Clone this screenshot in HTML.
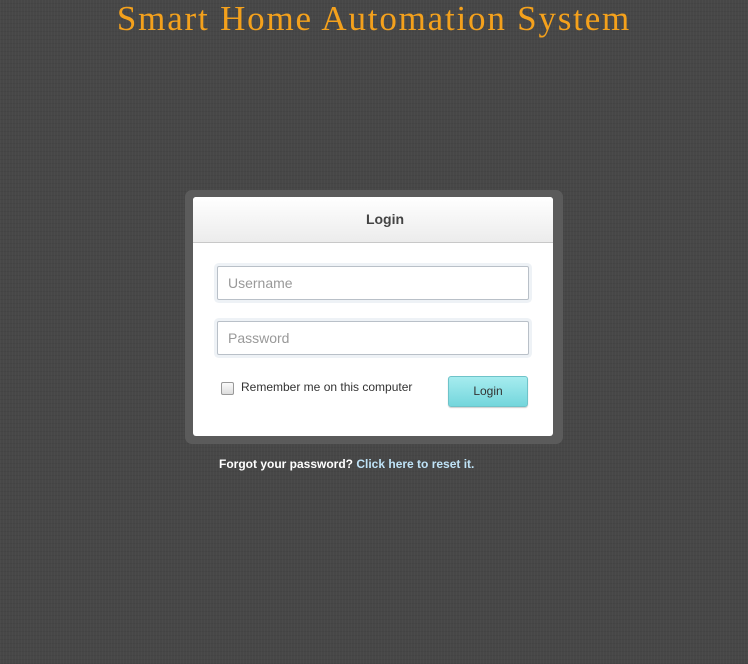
<!DOCTYPE html>
<html><head><style>
html,body{margin:0;padding:0;width:748px;height:664px;overflow:hidden;
background:#474747;
background-image:repeating-linear-gradient(90deg,rgba(255,255,255,.025) 0 1px,transparent 1px 3px),repeating-linear-gradient(0deg,rgba(0,0,0,.05) 0 1px,transparent 1px 4px);
font-family:"Liberation Sans",sans-serif;position:relative}
h1{position:absolute;left:0;width:748px;top:-1px;margin:0;text-align:center;font-family:"Liberation Serif",serif;font-weight:normal;font-size:35px;color:#f4a11c;letter-spacing:1.8px}
.frame{position:absolute;left:185px;top:190px;width:378px;height:254px;background:#5b5b5b;border-radius:7px}
.card{position:absolute;left:193px;top:197px;width:360px;height:239px;background:#fff;border-radius:3px;overflow:hidden}
.hd{height:45px;border-bottom:1px solid #c8c8c8;background:linear-gradient(#fff,#ececec);text-align:center;line-height:45px;font-weight:bold;font-size:14px;color:#444;padding-left:24px}
.in{position:absolute;left:24px;height:32px;border:1px solid #b9c0c8;border-radius:2px;box-shadow:0 0 0 3px #eef2f6;font-size:14px;color:#999;line-height:32px;padding-left:10px;box-sizing:content-box;width:300px}
.cb{position:absolute;left:28px;top:185px;width:11px;height:11px;border:1px solid #999;border-radius:2px;background:linear-gradient(#fafafa,#ddd)}
.rm{position:absolute;left:48px;top:183px;font-size:12px;color:#333}
.btn{position:absolute;left:255px;top:179px;width:78px;height:29px;border:1px solid #6fc3c9;border-radius:3px;background:linear-gradient(#a6ecef,#74d6dc);font-size:12px;color:#333;text-align:center;line-height:29px;box-shadow:0 1px 1px rgba(0,0,0,.2)}
.fg{position:absolute;left:219px;top:457px;font-size:12px;font-weight:bold;color:#fff}
.fg span{color:#bfe3f7}
</style></head><body>
<h1>Smart Home Automation System</h1>
<div class="frame"></div>
<div class="card">
<div class="hd">Login</div>
<div class="in" style="top:69px">Username</div>
<div class="in" style="top:124px">Password</div>
<div class="cb"></div><div class="rm">Remember me on this computer</div>
<div class="btn">Login</div>
</div>
<div class="fg">Forgot your password? <span>Click here to reset it.</span></div>
</body></html>
